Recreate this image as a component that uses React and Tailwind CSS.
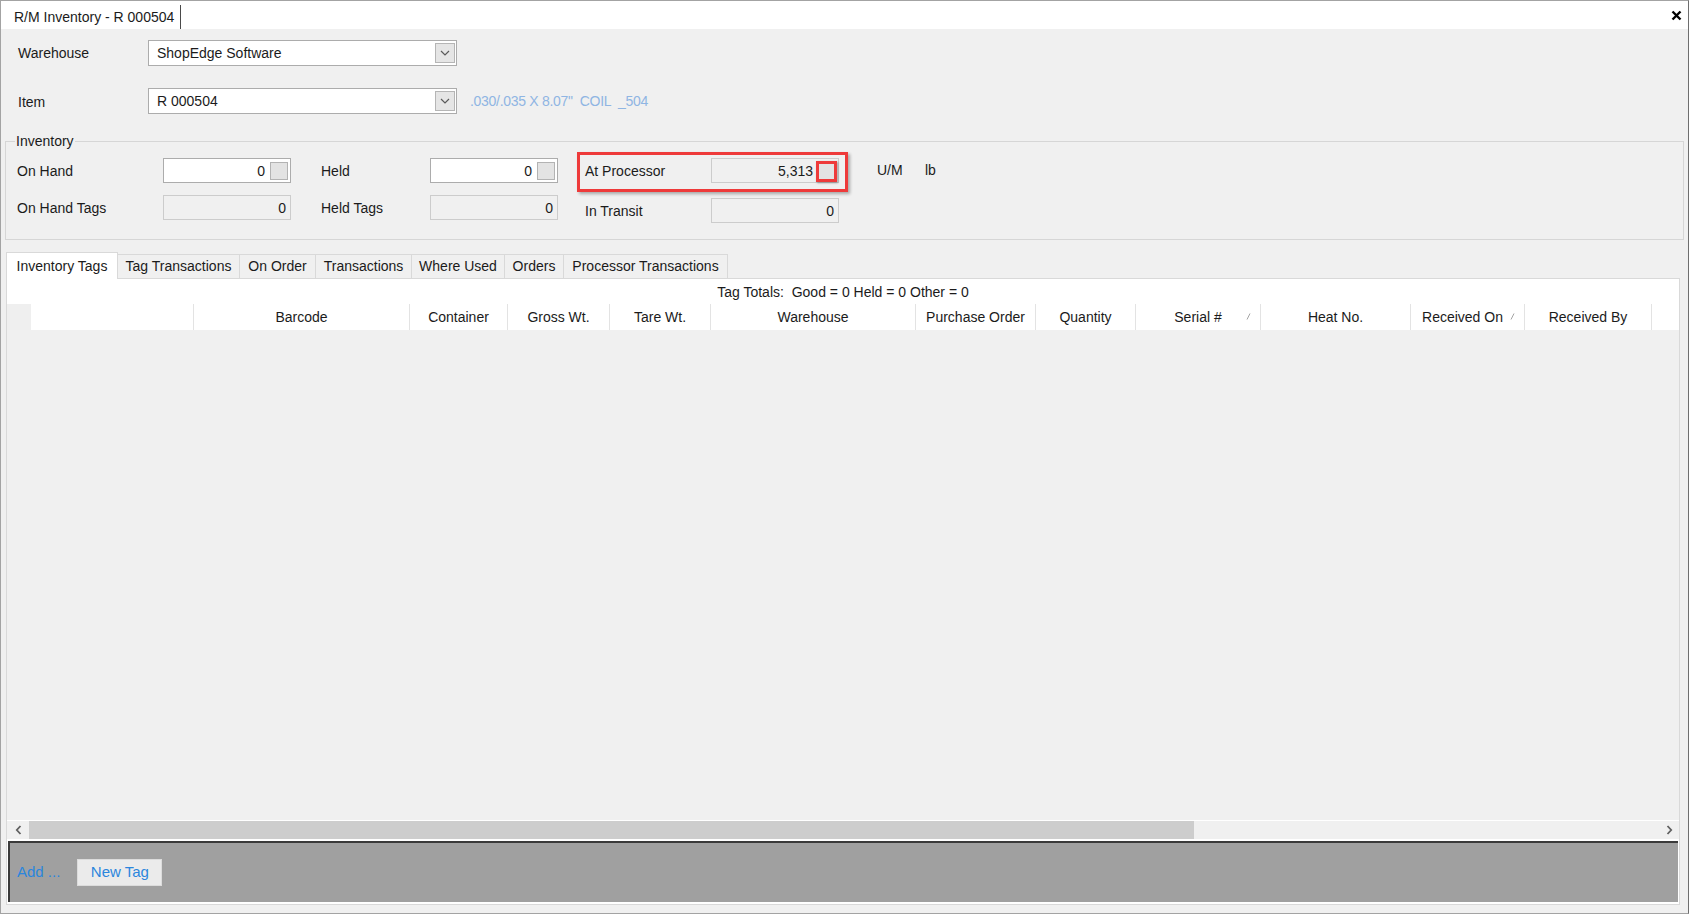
import React from "react";

function Chevron() {
  return (
    <svg width="10" height="6" viewBox="0 0 10 6" fill="none">
      <path d="M1 1 L5 5 L9 1" stroke="#5a5a5a" strokeWidth="1.2" />
    </svg>
  );
}

function Combo({ text }) {
  return (
    <div className="w-[309px] h-[26px] border border-[#acacac] bg-white flex items-center">
      <div className="flex-1 pl-[8px] text-[14px] text-[#1b1b1b]">{text}</div>
      <div className="w-[20px] h-[20px] mr-[1px] bg-[#e5e5e5] border border-[#b5b5b5] flex items-center justify-center">
        <Chevron />
      </div>
    </div>
  );
}

function Box({ value, disabled, btn, red }) {
  const cls = disabled
    ? "w-[128px] h-[25px] border border-[#cccccc] bg-[#f0f0f0] flex items-center justify-end"
    : "w-[128px] h-[25px] border border-[#acacac] bg-white flex items-center justify-end";
  return (
    <div className={cls}>
      <span className="text-[14px] text-[#1b1b1b] pr-[3px] pt-[1px]">{value}</span>
      {btn && !red && (
        <div className="w-[18px] h-[18px] mr-[2px] ml-[2px] bg-[#e3e3e3] border border-[#b3b3b3]" />
      )}
      {red && (
        <div className="w-[21px] h-[21px] mr-[1px] self-end border-[3px] border-[#ee3a3a] bg-[#e3e3e3] shadow-[1px_1px_2px_rgba(0,0,0,0.35)]" />
      )}
      {!btn && !red && <span className="w-[1px]" />}
    </div>
  );
}

function SortGlyph() {
  return (
    <svg className="absolute right-[9px] top-[9px]" width="5" height="7" viewBox="0 0 5 7">
      <path d="M1 6.5 L4 0.5" stroke="#9a9a9a" strokeWidth="0.9" />
    </svg>
  );
}

const cols = [
  { t: "", w: "w-[163px]" },
  { t: "Barcode", w: "w-[216px]" },
  { t: "Container", w: "w-[98px]" },
  { t: "Gross Wt.", w: "w-[102px]" },
  { t: "Tare Wt.", w: "w-[101px]" },
  { t: "Warehouse", w: "w-[205px]" },
  { t: "Purchase Order", w: "w-[120px]" },
  { t: "Quantity", w: "w-[100px]" },
  { t: "Serial #", w: "w-[125px]", g: true },
  { t: "Heat No.", w: "w-[150px]" },
  { t: "Received On", w: "w-[114px]", g: true, shift: true },
  { t: "Received By", w: "w-[127px]" },
];

const tabs = [
  { t: "Tag Transactions", w: "w-[122px]" },
  { t: "On Order", w: "w-[76px]" },
  { t: "Transactions", w: "w-[96px]" },
  { t: "Where Used", w: "w-[93px]" },
  { t: "Orders", w: "w-[59px]" },
  { t: "Processor Transactions", w: "w-[164px]" },
];

export default function App() {
  return (
    <div className="w-[1689px] h-[914px] border border-[#a3a3a3] border-r-[#6e6e6e] bg-[#f0f0f0] flex flex-col font-['Liberation_Sans',Arial,sans-serif] text-[#1b1b1b] overflow-hidden">
      {/* Title strip */}
      <div className="h-[28px] bg-white flex items-end shrink-0">
        <div className="ml-[7px] h-[24px] pl-[6px] pr-[6px] flex items-center border-r-[1.5px] border-[#4a4a4a] text-[14px]">
          R/M Inventory - R 000504
        </div>
        <div className="flex-1" />
        <div className="self-center mr-[6px] mt-[1px]">
          <svg width="11" height="11" viewBox="0 0 11 11">
            <path d="M1.5 1.5 L9.5 9.5 M9.5 1.5 L1.5 9.5" stroke="#000" strokeWidth="2.4" />
          </svg>
        </div>
      </div>

      {/* Warehouse */}
      <div className="mt-[11px] flex items-center h-[26px] shrink-0">
        <div className="w-[147px] pl-[17px] text-[14px] pt-[1px]">Warehouse</div>
        <Combo text="ShopEdge Software" />
      </div>

      {/* Item */}
      <div className="mt-[22px] flex items-center h-[26px] shrink-0">
        <div className="w-[147px] pl-[17px] text-[14px] pt-[3px]">Item</div>
        <Combo text="R 000504" />
        <div className="ml-[13px] text-[14px] text-[#8fb5e3] whitespace-pre tracking-[-0.3px] pt-[1px]">
          {'.030/.035 X 8.07"  COIL  _504'}
        </div>
      </div>

      {/* Inventory group */}
      <fieldset className="mt-[20px] mx-[4px] border border-[#d6d6d6] pt-[9px] pb-[16px] shrink-0">
        <legend className="ml-[9px] px-[1px] text-[14px] leading-[15px]">Inventory</legend>
        <div className="flex items-center h-[25px] pl-[11px]">
          <div className="w-[146px] text-[14px] pt-[2px]">On Hand</div>
          <Box value="0" btn />
          <div className="ml-[30px] w-[109px] text-[14px] pt-[2px]">Held</div>
          <Box value="0" btn />
          <div className="ml-[27px] relative flex items-center">
            <div className="w-[126px] text-[14px] pt-[2px]">At Processor</div>
            <Box value="5,313" disabled red />
            <div className="absolute -left-[8px] -top-[6px] w-[271px] h-[40px] border-[3px] border-[#ee3a3a] shadow-[2px_2px_3px_rgba(0,0,0,0.3)] pointer-events-none" />
          </div>
          <div className="ml-[38px] w-[48px] text-[14px]">U/M</div>
          <div className="text-[14px]">lb</div>
        </div>
        <div className="flex items-start h-[28px] pl-[11px] mt-[12px]">
          <div className="flex items-center">
            <div className="w-[146px] text-[14px] pt-[2px]">On Hand Tags</div>
            <Box value="0" disabled />
            <div className="ml-[30px] w-[109px] text-[14px] pt-[2px]">Held Tags</div>
            <Box value="0" disabled />
          </div>
          <div className="ml-[27px] mt-[3px] flex items-center">
            <div className="w-[126px] text-[14px] pt-[2px]">In Transit</div>
            <Box value="0" disabled />
          </div>
        </div>
      </fieldset>

      {/* Tabs */}
      <div className="mt-[12px] ml-[5px] h-[26px] flex items-end shrink-0">
        <div className="relative z-10 -mb-px h-[27px] w-[112px] bg-white border border-b-0 border-[#d9d9d9] flex items-center justify-center text-[14px]">
          Inventory Tags
        </div>
        {tabs.map((t) => (
          <div
            key={t.t}
            className={"h-[24px] bg-[#f0f0f0] border-t border-r border-[#d9d9d9] flex items-center justify-center text-[14px] " + t.w}
          >
            {t.t}
          </div>
        ))}
      </div>

      {/* Tab page */}
      <div className="ml-[5px] mb-[8px] w-[1674px] flex-1 border border-[#d9d9d9] bg-white flex flex-col">
        <div className="h-[25px] flex items-center justify-center text-[14px] whitespace-pre bg-white pt-[1px]">
          {"Tag Totals:  Good = 0 Held = 0 Other = 0"}
        </div>
        <div className="h-[26px] flex bg-white">
          <div className="w-[24px] bg-[#efefef]" />
          {cols.map((c, i) => (
            <div
              key={i}
              className={"relative h-full border-r border-[#e3e3e3] flex items-center justify-center text-[14px] pt-[1px] " + c.w}
            >
              <span className={c.shift ? "pr-[10px]" : ""}>{c.t}</span>
              {c.g && <SortGlyph />}
            </div>
          ))}
          <div className="flex-1 bg-white" />
        </div>
        <div className="flex-1 bg-[#f0f0f0]" />
        {/* horizontal scrollbar */}
        <div className="h-[19px] flex bg-[#f0f0f0] border-t border-white">
          <div className="w-[22px] flex items-center justify-center">
            <svg width="7" height="10" viewBox="0 0 7 10">
              <path d="M5.5 1 L1.8 5 L5.5 9" stroke="#606060" strokeWidth="1.8" fill="none" />
            </svg>
          </div>
          <div className="w-[1165px] bg-[#cdcdcd]" />
          <div className="flex-1" />
          <div className="w-[20px] flex items-center justify-center">
            <svg width="7" height="10" viewBox="0 0 7 10">
              <path d="M1.5 1 L5.2 5 L1.5 9" stroke="#606060" strokeWidth="1.8" fill="none" />
            </svg>
          </div>
        </div>
        <div className="mt-[2px] mb-[2px] mx-[1px] h-[61px] bg-[#a0a0a0] border-t-2 border-l-2 border-[#3a3a3a] flex items-center pl-[7px] shrink-0">
          <span className="text-[15px] text-[#2b86dd]">Add ...</span>
          <div className="ml-[17px] w-[85px] h-[27px] bg-[#ebebeb] border border-[#dcdcdc] flex items-center justify-center text-[15px] text-[#2b86dd]">
            New Tag
          </div>
        </div>
      </div>
    </div>
  );
}
